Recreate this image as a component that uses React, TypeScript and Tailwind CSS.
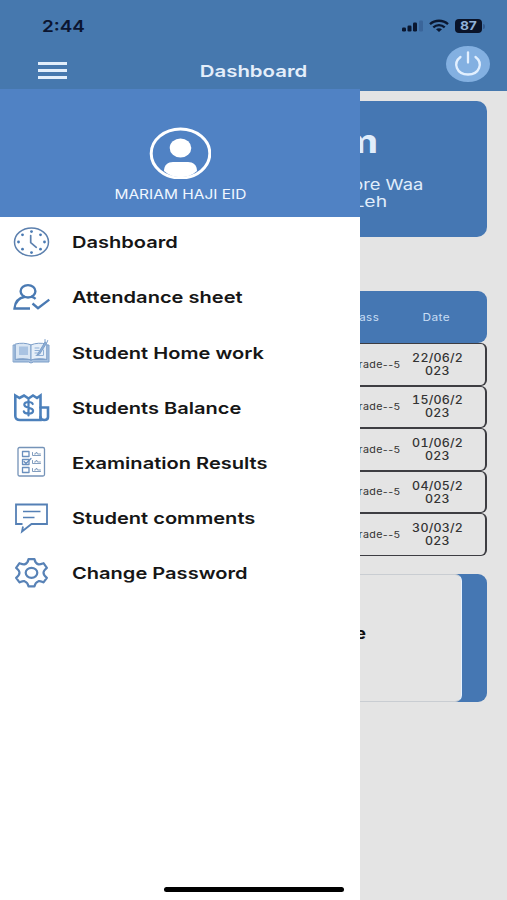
import React from "react";

type TextProps = { className?: string; children: React.ReactNode };

// Horizontally widened single-line label
function Wide({ className = "", children }: TextProps) {
  return (
    <span className={`inline-block whitespace-nowrap ${className}`}>{children}</span>
  );
}

const svgProps = {
  fill: "none",
  stroke: "#4a7ab3",
  strokeLinecap: "round" as const,
  strokeLinejoin: "round" as const,
  preserveAspectRatio: "none",
};

function ClockIcon() {
  return (
    <svg {...svgProps} viewBox="0 0 38 32" className="w-[38px] h-8" strokeWidth="1.5" stroke="#5c80ae">
      <ellipse cx="19.500" cy="16" rx="17" ry="14" />
      <path d="M18.700 9.5v7.2l5.600 4.600" strokeWidth="1.700" />
      <g fill="#4a7ab3" stroke="none">
        <circle cx="19.500" cy="5.600" r="1.400" />
        <circle cx="19.500" cy="26.600" r="1.400" />
        <circle cx="6.500" cy="16" r="1.400" />
        <circle cx="32.500" cy="16" r="1.400" />
        <circle cx="10.500" cy="8.800" r="1.400" />
        <circle cx="28.500" cy="8.800" r="1.400" />
        <circle cx="10.500" cy="23.200" r="1.400" />
        <circle cx="28.500" cy="23.200" r="1.400" />
      </g>
    </svg>
  );
}

function PersonCheckIcon() {
  return (
    <svg {...svgProps} viewBox="0 0 38 32" className="w-[38px] h-8" strokeWidth="2.400" strokeLinecap="butt" strokeLinejoin="miter">
      <ellipse cx="16" cy="10.300" rx="7.400" ry="6.200" />
      <path d="M18 27.500H2.500C3 20.500 7.500 16.700 13 15.700M19 15.700c1.800.500 3.400 1.200 4.600 2.200" />
      <path d="M20.500 22.500l5.500 4.600L37.300 18.600" />
    </svg>
  );
}

function BookIcon() {
  return (
    <svg {...svgProps} viewBox="0 0 38 32" className="w-[38px] h-8" strokeWidth="1" stroke="#7d9fc9">
      <path d="M1.500 9H3.500v14.500h14l1.500 1 1.500-1h14V9h2.500v17H21.500L19 27l-2.500-1h-15z" fill="#a8c1df" />
      <path d="M3.500 8c5-1.300 11-1 15.500.9v15c-5-1.500-11-1.700-15.500-.5z" fill="#d8e5f3" />
      <path d="M34.500 8c-5-1.300-11-1-15.500.9v15c5-1.500 11-1.700 15.500-.5z" fill="#e5eef8" />
      <rect x="7" y="10.500" width="9" height="8.500" fill="#a9c3e2" stroke="none" />
      <path d="M23 12h4M23 14.500h4M23 17h3M24 19.500h7M31.500 14v5" stroke="#8fafd5" />
      <path d="M26 17.500L33 6l1.700 1-7 11-2.500 1zM33 6V3.500M34.700 7l1-2.500" fill="#8daed5" />
    </svg>
  );
}

function ReceiptIcon() {
  return (
    <svg {...svgProps} viewBox="0 0 38 32" className="w-[38px] h-8" strokeWidth="2.600" strokeLinejoin="miter" stroke="#4c80bb">
      <path d="M28 29H8c-3 0-4.700-1.500-4.700-4V4.500l4.200 2.500L12 4.500l4.500 3L21 4.500l4 2.500L28.500 4.500V29z" />
      <path d="M28.500 16.500h7.500V26c0 2-1.500 3-3.700 3s-3.800-1-3.800-3" />
      <path d="M20.700 13c-.5-1.500-2-2-4.200-2-2.800 0-4.200 1-4.200 2.700 0 4 8.800 2 8.800 6 0 2-1.800 2.900-4.600 2.900s-4.400-.8-4.700-2.300M16.500 9v15.500" strokeWidth="2.200" />
    </svg>
  );
}

function ExamIcon() {
  return (
    <svg {...svgProps} viewBox="0 0 38 32" className="w-[38px] h-8" strokeWidth="1" stroke="#7593b8">
      <rect x="6" y="1.500" width="26.500" height="28.500" rx="1.500" strokeWidth="1.300" />
      <g strokeWidth="1.300" stroke="#6a8fbd">
        <rect x="10.500" y="5.500" width="6.500" height="5" />
        <rect x="10.500" y="13.500" width="6.500" height="5" />
        <rect x="10.500" y="21.500" width="6.500" height="5" />
        <path d="M12 15.500l2 2 5-5" />
      </g>
      <path d="M20.500 6.500v3h8M22.500 8h1l1-2 1 2h3M20.500 14.500v3h8M22.500 16h1l1-2 1 2h3M20.500 22.500v3h8M22.500 24h1l1-2 1 2h3" strokeWidth=".9" />
    </svg>
  );
}

function CommentIcon() {
  return (
    <svg {...svgProps} viewBox="0 0 38 32" className="w-[38px] h-8" strokeWidth="1.800" strokeLinejoin="miter" strokeLinecap="butt" stroke="#5580b5">
      <path d="M10.500 22H4V2.500h31V22H19.500L10 29.500l1-5" />
      <path d="M11 9.500h17.500M11 15.500h11.500" strokeWidth="1.700" />
    </svg>
  );
}

function GearIcon() {
  return (
    <svg {...svgProps} viewBox="0 0 38 32" className="w-[38px] h-8" strokeWidth="2.200" stroke="#5882b6">
      <ellipse cx="19.500" cy="15.800" rx="5.800" ry="5" />
      <path d="M16.500 2.200h6c.5 3 1.500 4.300 4 5.200 2 .3 3.500-.6 5-1.200l3.400 4.600c-2.400 1.800-3.400 3-3.400 5s1 3.200 3.400 5l-3.400 4.600c-1.500-.6-3-1.500-5-1.200-2.500.9-3.500 2.200-4 5.200h-6c-.5-3-1.500-4.300-4-5.200-2-.3-3.500.6-5 1.200l-3.400-4.600c2.400-1.800 3.400-3 3.400-5s-1-3.200-3.400-5l3.400-4.600c1.500.6 3 1.500 5 1.200 2.500-.9 3.500-2.200 4-5.200z" />
    </svg>
  );
}

const menu = [
  { label: "Dashboard", Icon: ClockIcon },
  { label: "Attendance sheet", Icon: PersonCheckIcon },
  { label: "Student Home work", Icon: BookIcon },
  { label: "Students Balance", Icon: ReceiptIcon },
  { label: "Examination Results", Icon: ExamIcon },
  { label: "Student comments", Icon: CommentIcon },
  { label: "Change Password", Icon: GearIcon },
];

const dates = ["22/06/2", "15/06/2", "01/06/2", "04/05/2", "30/03/2"];

function StatusBar() {
  return (
    <div className="flex h-[46px] items-center justify-between pt-[6px] pl-[42px] pr-[22px]">
      <Wide className="origin-left scale-x-[1.18] text-[16px] font-semibold text-[#0b1530]">2:44</Wide>
      <div className="flex items-center">
        <svg viewBox="0 0 24 14" className="mr-[4px] h-[14px] w-6" fill="#0a1730">
          <rect x="1" y="8.500" width="4" height="4" rx="1.200" />
          <rect x="6.500" y="6.500" width="4" height="6" rx="1.200" />
          <rect x="12" y="3.500" width="4" height="9" rx="1.200" />
          <rect x="18" y="1.500" width="4" height="11" rx="1.200" fill="#3a659a" />
        </svg>
        <svg viewBox="0 0 20 14" className="mr-[6px] h-[14px] w-5" fill="none" stroke="#0a1730" strokeWidth="2.300">
          <path d="M1 5.200c5-4.600 13-4.600 18 0" />
          <path d="M4.300 8.400c3.200-3 8.200-3 11.400 0" />
          <path d="M7 10.300c1.800-1.500 4.200-1.500 6 0L10 13z" fill="#0a1730" stroke="none" />
        </svg>
        <div className="flex h-[14px] w-[27px] items-center justify-center rounded-[4px] bg-[#0a1328]">
          <Wide className="scale-x-[1.15] text-[12px] font-bold leading-[14px] text-[#8fb0d8]">87</Wide>
        </div>
        <div className="ml-px h-[5px] w-[2px] rounded-r-full bg-[#355d90]" />
      </div>
    </div>
  );
}

function NavBar() {
  return (
    <div className="grid h-11 grid-cols-[100px_1fr_100px] items-center">
      <div className="flex w-[29px] translate-y-[2px] flex-col gap-[4px] ml-[38px]">
        <span className="h-[3px] bg-[#e2eefb]" />
        <span className="h-[3px] bg-[#e2eefb]" />
        <span className="h-[3px] bg-[#e2eefb]" />
      </div>
      <div className="flex translate-y-[3px] justify-center">
        <Wide className="scale-x-[1.235] text-[16.500px] font-semibold text-[#e4eefa]">Dashboard</Wide>
      </div>
      <svg viewBox="0 0 44 36" className="mb-[8px] ml-[39px] h-9 w-11" fill="none" stroke="#e3f0ff" strokeWidth="2.300" strokeLinecap="round">
        <ellipse cx="22" cy="18" rx="22" ry="18" fill="#83b0e1" stroke="none" />
        <path d="M22 6.500v10" />
        <path d="M14.500 11c-8 6-4 17.500 7.500 17.500S37.500 17 29.500 11" />
      </svg>
    </div>
  );
}

function Drawer() {
  return (
    <aside className="-mt-px flex w-[360px] shrink-0 flex-col bg-white">
      <div className="flex h-[128px] flex-col items-center bg-[#5082c4] pt-[38px]">
        <svg viewBox="0 0 62 52" className="h-[52px] w-[62px]" preserveAspectRatio="none">
          <ellipse cx="31.500" cy="26.500" rx="29.300" ry="24.500" fill="none" stroke="#fff" strokeWidth="3" />
          <ellipse cx="31.500" cy="21" rx="10.800" ry="9.500" fill="#fff" />
          <path d="M15 44c0-6 4-9 9-9h15c5 0 9 3 9 9-9 8.300-24 8.300-33 0z" fill="#fff" />
        </svg>
        <Wide className="mt-[6px] scale-x-[1.19] text-[13px] leading-[18px] text-[#f0f7ff]">MARIAM HAJI EID</Wide>
      </div>
      <nav className="-mt-[2px] flex flex-col">
        {menu.map(({ label, Icon }) => (
          <div key={label} className="flex h-[55.200px] items-center pl-3">
            <div className="flex pb-[2px]">
              <Icon />
            </div>
            <Wide className="ml-[22px] origin-left scale-x-[1.216] text-[16.500px] font-semibold text-[#161616]">{label}</Wide>
          </div>
        ))}
      </nav>
      <div className="mb-[8px] mt-auto ml-[164px] h-[5px] w-[180px] rounded-full bg-black" />
    </aside>
  );
}

function Content() {
  return (
    <main className="flex min-w-0 flex-1 flex-col overflow-hidden border-t border-[#4678ae] bg-[#e4e4e4] pr-5">
      <section className="mt-[10px] flex h-[136px] flex-col items-end rounded-r-[10px] bg-[#4577b3] pt-[21px] text-[#e0edfb]">
        <Wide className="mr-[109px] origin-right scale-x-[1.22] text-[32px] font-bold leading-[40px]">m</Wide>
        <Wide className="mr-[64px] mt-[14px] origin-right scale-x-[1.22] text-[15px] leading-[17px]">ore Waa</Wide>
        <Wide className="mr-[100px] origin-right scale-x-[1.29] text-[15px] leading-[17px]">Leh</Wide>
      </section>
      <section className="mt-[54px]">
        <div className="flex h-[52px] items-center justify-end rounded-r-[9px] bg-[#4577b3] pt-px text-[10.500px] text-[#c9def5]">
          <Wide className="mr-[36px] origin-right scale-x-[1.1] tracking-[0.4px]">Class</Wide>
          <div className="mr-[30px] flex w-[42px] shrink-0 justify-center">
            <Wide className="scale-x-[1.13] tracking-[0.4px]">Date</Wide>
          </div>
        </div>
        {dates.map((date) => (
          <div key={date} className="flex h-[42.600px] items-center justify-end rounded-r-[6px] border-y border-r-2 border-[#3d3d42] pt-px text-[#333]">
            <Wide className="mr-[11px] origin-right scale-x-[1.13] text-[9.500px] tracking-[0.300px]">Grade--5</Wide>
            <div className="mr-[21.500px] flex w-[52px] shrink-0 flex-col items-center text-[11.500px] font-medium leading-[13px] tabular-nums">
              <Wide className="scale-x-[1.080] tracking-[0.200px]">{date}</Wide>
              <Wide className="scale-x-[1.080] tracking-[0.200px]">023</Wide>
            </div>
          </div>
        ))}
      </section>
      <section className="mt-[18px] h-32 rounded-r-[9px] bg-[#4577b3] pr-[25px]">
        <div className="flex h-full items-center justify-end rounded-r-[7px] border-y border-r border-y-[#c9cdd2] border-r-[#e8f3ff] bg-[#e4e4e4] pr-[95px]">
          <Wide className="origin-right scale-x-[1.2] translate-y-[-4px] text-[15px] font-bold text-[#111]">e</Wide>
        </div>
      </section>
    </main>
  );
}

export default function App() {
  return (
    <div className="flex h-[900px] w-[507px] flex-col overflow-hidden bg-[#4678ae] font-['Inter','Liberation_Sans',sans-serif]">
      <header className="h-[90px] shrink-0">
        <StatusBar />
        <NavBar />
      </header>
      <div className="flex min-h-0 flex-1">
        <Drawer />
        <Content />
      </div>
    </div>
  );
}
